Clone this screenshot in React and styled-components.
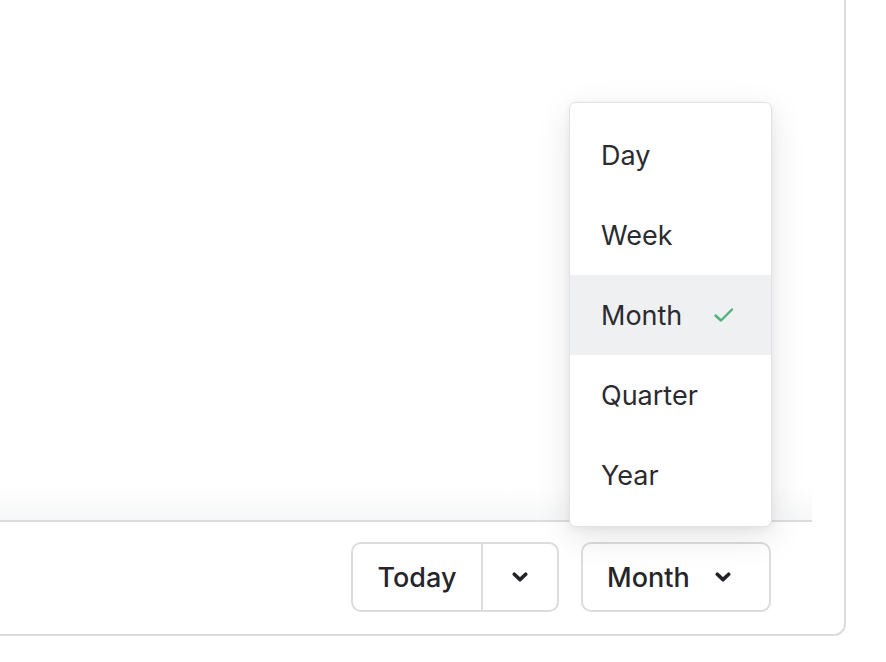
import React, { useState } from 'react';
import styled, { createGlobalStyle } from 'styled-components';

const GlobalStyle = createGlobalStyle`
    html, body {
        margin: 0;
        padding: 0;
        background: #fff;
    }
    body {
        font-family: Inter, "Noto Sans", "Liberation Sans", sans-serif;
        color: #2b2b30;
        overflow: hidden;
    }
`;

const Page = styled.div`
    width: 886px;
    height: 662px;
    overflow: hidden;
    display: flex;
    align-items: flex-start;
`;

const Card = styled.div`
    box-sizing: border-box;
    width: 848px;
    height: 638px;
    margin: -2px 0 0 -2px;
    border: 2px solid #dcdcde;
    border-radius: 0 0 12px 0;
    padding: 0 32px 0 0;
    display: flex;
    flex-direction: column;
    background: #fff;
`;

const Body = styled.div`
    flex: 1;
    border-bottom: 2px solid #dddde0;
    background: linear-gradient(to bottom, #fff 0, #fff calc(100% - 34px), #f6f7f8 100%);
`;

const Footer = styled.div`
    display: flex;
    justify-content: flex-end;
    gap: 22px;
    padding: 20px 41px 22px 0;
`;

const ButtonGroup = styled.div`
    display: flex;
    height: 70px;
    box-sizing: border-box;
    border: 2px solid #dcdcde;
    border-radius: 10px;
    background: #fff;
    overflow: hidden;
`;

const Segment = styled.button`
    all: unset;
    box-sizing: border-box;
    display: flex;
    align-items: center;
    justify-content: ${p => (p.$start ? 'flex-start' : 'center')};
    gap: 25px;
    height: 100%;
    width: ${p => p.$width}px;
    padding: 0 0 0 ${p => p.$pad}px;
    font-family: inherit;
    font-size: 27px;
    font-weight: 500;
    color: #26262a;
    cursor: pointer;
    & + & {
        border-left: 2px solid #dcdcde;
    }
`;

const MenuAnchor = styled.div`
    position: relative;
`;

const Menu = styled.ul`
    position: absolute;
    right: -1px;
    bottom: calc(100% + 15px);
    width: 203px;
    box-sizing: border-box;
    margin: 0;
    padding: 12px 0 11px;
    list-style: none;
    background: #fff;
    border: 1px solid #e2e2e4;
    border-radius: 7px;
    box-shadow: 0 10px 34px rgba(0, 0, 0, 0.11), 0 2px 8px rgba(0, 0, 0, 0.05);
`;

const MenuItem = styled.li`
    display: flex;
    align-items: center;
    gap: 31px;
    height: 80px;
    padding: 0 31px;
    font-size: 27px;
    color: #2b2b30;
    background: ${p => (p.$active ? '#eff0f2' : 'transparent')};
    cursor: pointer;
`;

const Chevron = () => (
    <svg width="16" height="12" viewBox="0 0 16 12" fill="none">
        <path d="M2.3 3.2 L8 8.6 L13.7 3.2" stroke="#232327" strokeWidth="3.6" strokeLinecap="round" strokeLinejoin="round" />
    </svg>
);

const Check = () => (
    <svg width="22" height="18" viewBox="0 0 22 18" fill="none">
        <path d="M2.5 9.5 L8 14.5 L19 3.5" stroke="#4fb27b" strokeWidth="2.4" strokeLinecap="round" strokeLinejoin="round" />
    </svg>
);

const views = ['Day', 'Week', 'Month', 'Quarter', 'Year'];

export default function App() {
    const [view, setView] = useState('Month');
    const [open, setOpen] = useState(true);

    return (
        <Page>
            <GlobalStyle />
            <Card>
                <Body />
                <Footer>
                    <ButtonGroup>
                        <Segment $pad={0} $width={128}>Today</Segment>
                        <Segment $pad={0} $width={76}><Chevron /></Segment>
                    </ButtonGroup>
                    <MenuAnchor>
                        {open &&
                            <Menu>
                                {views.map(v => (
                                    <MenuItem
                                        key={v}
                                        $active={v === view}
                                        onClick={() => { setView(v); setOpen(false); }}
                                    >
                                        {v}
                                        {v === view && <Check />}
                                    </MenuItem>
                                ))}
                            </Menu>
                        }
                        <ButtonGroup>
                            <Segment $start $pad={24} $width={186} onClick={() => setOpen(!open)}>
                                {view}
                                <Chevron />
                            </Segment>
                        </ButtonGroup>
                    </MenuAnchor>
                </Footer>
            </Card>
        </Page>
    );
}
